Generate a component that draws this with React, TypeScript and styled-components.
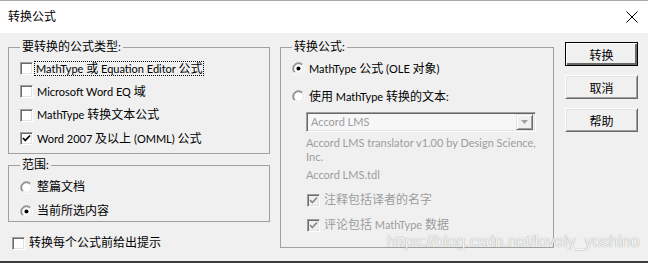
import styled, { createGlobalStyle } from "styled-components";

const GlobalStyle = createGlobalStyle`
  html, body {
    margin: 0;
    padding: 0;
    background: #f0f0f0;
  }
  body {
    font-family: Lato, "Noto Sans CJK SC", sans-serif;
    font-size: 11px;
    color: #000;
  }
`;

const Window = styled.div`
  position: relative;
  width: 648px;
  height: 263px;
  box-sizing: border-box;
  background: #f0f0f0;
  border-top: 1px solid #a9a9a9;
  border-bottom: 2px solid #3c3c3c;
  display: flex;
  flex-direction: column;
  overflow: hidden;
`;

const TitleBar = styled.div`
  height: 32px;
  flex: none;
  background: #fff;
  display: flex;
  align-items: center;
  justify-content: space-between;
  padding: 0 10px 0 8px;
  line-height: 16px;
`;

const Body = styled.div`
  display: flex;
  align-items: flex-start;
  padding: 6px 10px 0 8px;
`;

const LeftColumn = styled.div`
  width: 262px;
  display: flex;
  flex-direction: column;
`;

const MiddleColumn = styled.div`
  width: 274px;
  margin-left: 10px;
`;

const ButtonColumn = styled.div`
  width: 73px;
  margin-left: 11px;
  padding-top: 3px;
  display: flex;
  flex-direction: column;
  gap: 9px;
`;

const Group = styled.fieldset<{ $height: number; $top?: number }>`
  box-sizing: border-box;
  height: ${(p) => p.$height}px;
  margin: ${(p) => p.$top || 0}px 0 0 0;
  padding: 0 11px;
  border: 1px solid #a0a0a0;
  min-inline-size: 0;
`;

const Legend = styled.legend`
  padding: 0 2px;
  line-height: 16px;
`;

const List = styled.div<{ $pad: number; $gap: number }>`
  display: flex;
  flex-direction: column;
  padding-top: ${(p) => p.$pad}px;
  gap: ${(p) => p.$gap}px;
`;

const Row = styled.label<{ $h: number; $disabled?: boolean; $indent?: number }>`
  display: flex;
  align-items: center;
  height: ${(p) => p.$h}px;
  gap: 4px;
  padding-left: ${(p) => p.$indent || 0}px;
  color: ${(p) => (p.$disabled ? "#9d9d9d" : "#000")};
  white-space: nowrap;
`;

const Label = styled.span`
  line-height: 14px;
`;

const FocusText = styled.span`
  line-height: 13px;
  outline: 1px dotted #000;
  padding: 0 1px;
  margin-left: -2px;
`;

// CJK glyphs run a size larger than the Latin ones, as in the YaHei UI face
const Han = styled.span`
  font-size: 12px;
`;

const Box = styled.span<{ $disabled?: boolean }>`
  box-sizing: border-box;
  width: 13px;
  height: 13px;
  flex: none;
  border: 1px solid;
  border-color: #a0a0a0 #fff #fff #a0a0a0;
  box-shadow: inset 1px 1px #696969, inset -1px -1px #e3e3e3;
  background: ${(p) => (p.$disabled ? "#f0f0f0" : "#fff")};
  display: flex;
  align-items: center;
  justify-content: center;
`;

const SubBlock = styled.div`
  padding-left: 14px;
`;

const Select = styled.div`
  box-sizing: border-box;
  width: 230px;
  height: 20px;
  margin-top: 4px;
  border: 1px solid;
  border-color: #a0a0a0 #fff #fff #a0a0a0;
  box-shadow: inset 1px 1px #696969, inset -1px -1px #e3e3e3;
  background: #f7f7f7;
  display: flex;
  align-items: center;
  padding: 2px 2px 2px 4px;
  color: #9d9d9d;
`;

const SelectText = styled.span`
  flex: 1;
  line-height: 14px;
`;

const DropButton = styled.span`
  box-sizing: border-box;
  width: 17px;
  height: 16px;
  background: #f0f0f0;
  border: 1px solid;
  border-color: #e3e3e3 #696969 #696969 #e3e3e3;
  box-shadow: inset 1px 1px #fff, inset -1px -1px #a0a0a0;
  display: flex;
  align-items: center;
  justify-content: center;
`;

const Desc = styled.div<{ $top: number }>`
  width: 237px;
  margin-top: ${(p) => p.$top}px;
  line-height: 14px;
  color: #9d9d9d;
`;

const Button = styled.button<{ $default?: boolean }>`
  box-sizing: border-box;
  width: 73px;
  height: 24px;
  padding: 0;
  font-family: inherit;
  font-size: 12px;
  color: #000;
  background: #f0f0f0;
  border: 1px solid;
  border-color: ${(p) => (p.$default ? "#000" : "#fff #696969 #696969 #fff")};
  box-shadow: ${(p) =>
    p.$default
      ? "inset 1px 1px #fff, inset -2px -2px #696969, inset -1px -1px #000"
      : "inset 1px 1px #e3e3e3, inset -1px -1px #a0a0a0"};
`;

const BottomRow = styled(Row)`
  margin-top: 11px;
  padding-left: 4px;
`;

const Watermark = styled.div`
  position: absolute;
  left: 387px;
  top: 231px;
  font-family: "Liberation Sans", Arial, sans-serif;
  font-size: 16px;
  line-height: 20px;
  color: rgba(255, 255, 255, 0.92);
  text-shadow: 0 0 1px rgba(110, 110, 110, 0.85);
  white-space: nowrap;
  pointer-events: none;
`;

function T({ children }: { children: string }) {
  const parts = children.split(/([\u3000-\u9fff\uff00-\uffef]+)/);
  return (
    <>
      {parts.map((p, i) => (i % 2 === 1 ? <Han key={i}>{p}</Han> : p))}
    </>
  );
}

function Check({ checked, disabled }: { checked?: boolean; disabled?: boolean }) {
  return (
    <Box $disabled={disabled}>
      {checked && (
        <svg width="9" height="9" viewBox="0 0 9 9">
          <polyline
            points="1,4 3.3,6.5 8,1.5"
            fill="none"
            stroke={disabled ? "#8a8a8a" : "#000"}
            strokeWidth="1.8"
          />
        </svg>
      )}
    </Box>
  );
}

function Radio({ checked }: { checked?: boolean }) {
  const arc = (r: number, sweep: number, color: string) => {
    const d = r * 0.7071;
    return (
      <path
        d={`M ${6.5 - d} ${6.5 + d} A ${r} ${r} 0 0 ${sweep} ${6.5 + d} ${6.5 - d}`}
        fill="none"
        stroke={color}
        strokeWidth="1"
      />
    );
  };
  return (
    <svg width="13" height="13" viewBox="0 0 13 13" style={{ flex: "none" }}>
      <circle cx="6.5" cy="6.5" r="5" fill="#fff" />
      {arc(5.9, 1, "#a0a0a0")}
      {arc(5.9, 0, "#fff")}
      {arc(4.9, 1, "#696969")}
      {arc(4.9, 0, "#e3e3e3")}
      {checked && <circle cx="6.5" cy="6.5" r="2" fill="#000" />}
    </svg>
  );
}

export default function App() {
  return (
    <>
      <GlobalStyle />
      <Window>
        <TitleBar>
          <Han>转换公式</Han>
          <svg width="12" height="12" viewBox="0 0 12 12">
            <path d="M0.5 0.5 L11.5 11.5 M11.5 0.5 L0.5 11.5" stroke="#000" strokeWidth="1" />
          </svg>
        </TitleBar>
        <Body>
          <LeftColumn>
            <Group $height={115}>
              <Legend>
                <T>要转换的公式类型:</T>
              </Legend>
              <List $pad={2} $gap={0}>
                <Row $h={23.3}>
                  <Check />
                  <FocusText>
                    <T>MathType 或 Equation Editor 公式</T>
                  </FocusText>
                </Row>
                <Row $h={23.3}>
                  <Check />
                  <Label>
                    <T>Microsoft Word EQ 域</T>
                  </Label>
                </Row>
                <Row $h={23.3}>
                  <Check />
                  <Label>
                    <T>MathType 转换文本公式</T>
                  </Label>
                </Row>
                <Row $h={23.3}>
                  <Check checked />
                  <Label>
                    <T>Word 2007 及以上 (OMML) 公式</T>
                  </Label>
                </Row>
              </List>
            </Group>
            <Group $height={65} $top={3}>
              <Legend>
                <T>范围:</T>
              </Legend>
              <List $pad={4} $gap={4}>
                <Row $h={20}>
                  <Radio />
                  <Label>
                    <T>整篇文档</T>
                  </Label>
                </Row>
                <Row $h={20}>
                  <Radio checked />
                  <Label>
                    <T>当前所选内容</T>
                  </Label>
                </Row>
              </List>
            </Group>
            <BottomRow $h={20}>
              <Check />
              <Label>
                <T>转换每个公式前给出提示</T>
              </Label>
            </BottomRow>
          </LeftColumn>
          <MiddleColumn>
            <Group $height={209}>
              <Legend>
                <T>转换公式:</T>
              </Legend>
              <List $pad={2} $gap={5}>
                <Row $h={23}>
                  <Radio checked />
                  <Label>
                    <T>MathType 公式 (OLE 对象)</T>
                  </Label>
                </Row>
                <Row $h={23}>
                  <Radio />
                  <Label>
                    <T>使用 MathType 转换的文本:</T>
                  </Label>
                </Row>
              </List>
              <SubBlock>
                <Select>
                  <SelectText>Accord LMS</SelectText>
                  <DropButton>
                    <svg width="7" height="4" viewBox="0 0 7 4">
                      <path d="M0 0 H7 L3.5 4 Z" fill="#a0a0a0" />
                    </svg>
                  </DropButton>
                </Select>
                <Desc $top={4}>Accord LMS translator v1.00 by Design Science, Inc.</Desc>
                <Desc $top={4}>Accord LMS.tdl</Desc>
                <List $pad={8} $gap={5}>
                  <Row $h={20} $disabled $indent={1}>
                    <Check checked disabled />
                    <Label>
                      <T>注释包括译者的名字</T>
                    </Label>
                  </Row>
                  <Row $h={20} $disabled $indent={1}>
                    <Check checked disabled />
                    <Label>
                      <T>评论包括 MathType 数据</T>
                    </Label>
                  </Row>
                </List>
              </SubBlock>
            </Group>
          </MiddleColumn>
          <ButtonColumn>
            <Button $default>转换</Button>
            <Button>取消</Button>
            <Button>帮助</Button>
          </ButtonColumn>
        </Body>
        <Watermark>https://blog.csdn.net/lovely_yoshino</Watermark>
      </Window>
    </>
  );
}
